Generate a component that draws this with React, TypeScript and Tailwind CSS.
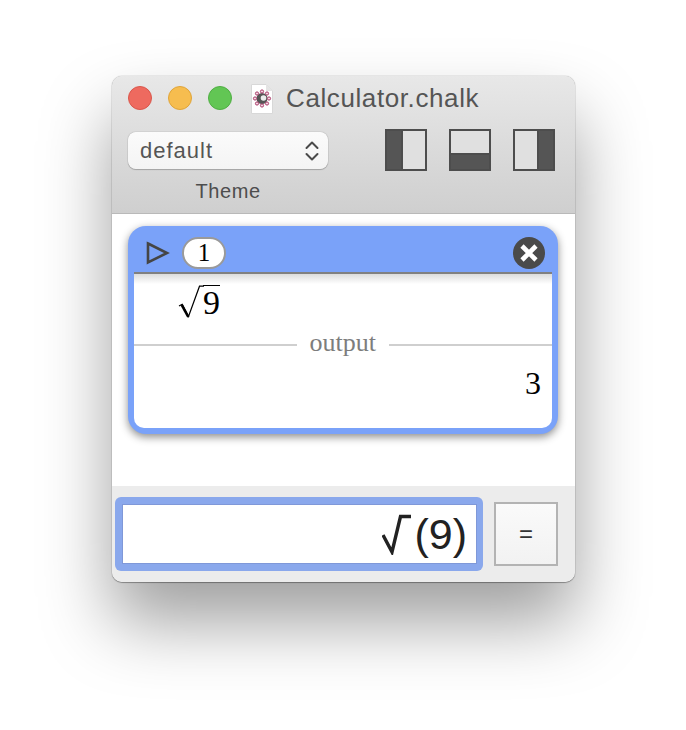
import React from 'react';

const sans = "font-['Liberation_Sans',Arial,sans-serif]";
const serif = "font-['Liberation_Serif','Times_New_Roman',serif]";

const DocIcon = () => (
  <svg width="24" height="32" viewBox="0 0 24 32">
    <path d="M1.5 1.5H16L22.5 8V30.5H1.5Z" fill="#fff" stroke="#d8d8d8" />
    <path d="M16 1.5V8H22.5Z" fill="#e4e4e4" />
    <circle cx="12" cy="15.5" r="5.5" fill="#555" />
    <circle cx="13.5" cy="15" r="2.8" fill="#ececec" />
    <circle cx="12" cy="8.5" r="1.6" fill="#f3d6e2" stroke="#a83a68" />
    <circle cx="12" cy="22.5" r="1.6" fill="#f3d6e2" stroke="#a83a68" />
    <circle cx="5" cy="15.5" r="1.6" fill="#f3d6e2" stroke="#a83a68" />
    <circle cx="19" cy="15.5" r="1.6" fill="#f3d6e2" stroke="#a83a68" />
    <circle cx="7" cy="10.5" r="1.6" fill="#f3d6e2" stroke="#a83a68" />
    <circle cx="17" cy="10.5" r="1.6" fill="#f3d6e2" stroke="#a83a68" />
    <circle cx="7" cy="20.5" r="1.6" fill="#f3d6e2" stroke="#a83a68" />
    <circle cx="17" cy="20.5" r="1.6" fill="#f3d6e2" stroke="#a83a68" />
  </svg>
);

const Chevrons = () => (
  <svg width="14" height="24" viewBox="0 0 14 24" fill="none" stroke="#4a4a4a" strokeWidth="2" strokeLinecap="round" strokeLinejoin="round">
    <path d="M1.5 9L7 3.5L12.5 9" />
    <path d="M1.5 15L7 20.5L12.5 15" />
  </svg>
);

const Radical = () => (
  <svg width="26" height="34" viewBox="0 0 26 34" fill="none" className="shrink-0">
    <path d="M1 21L4.2 19.3L10.5 31.5L21.5 1.2H26" stroke="#000" strokeWidth="1.2" />
    <path d="M3.7 19.8L10.3 32" stroke="#000" strokeWidth="2.6" />
  </svg>
);

const InputRadical = () => (
  <svg width="29" height="42" viewBox="0 0 29 42" fill="none" className="shrink-0">
    <path d="M1 22L10 39L18.5 3.5H29" stroke="#222" strokeWidth="3.4" />
  </svg>
);

const CloseIcon = () => (
  <svg width="32" height="32" viewBox="0 0 32 32">
    <circle cx="16" cy="16" r="16" fill="#4a4a4a" />
    <path d="M9 9L23 23M23 9L9 23" stroke="#fff" strokeWidth="4.6" />
  </svg>
);

export default function App() {
  return (
    <div className={`w-[686px] h-[730px] bg-white pt-[76px] pl-[112px] overflow-hidden ${sans}`}>
      <div className="w-[463px] h-[506px] rounded-[10px] overflow-hidden flex flex-col shadow-[0_40px_70px_rgba(0,0,0,0.38),0_0_1px_rgba(0,0,0,0.6),0_1px_1px_rgba(0,0,0,0.3)]">
        {/* toolbar */}
        <div className="h-[138px] shrink-0 bg-gradient-to-b from-[#e8e8e8] to-[#cfcfcf] border-b border-[#b9b9b9] pl-4 pr-5 flex flex-col">
          <div className="h-[44px] flex items-center shrink-0">
            <div className="w-6 h-6 rounded-full bg-[#ee6a5f] border border-[#d9574c]" />
            <div className="w-6 h-6 rounded-full bg-[#f6bd4f] border border-[#dfa43a] ml-4" />
            <div className="w-6 h-6 rounded-full bg-[#62c654] border border-[#50ae44] ml-4" />
            <div className="ml-[18px] mt-[2px]"><DocIcon /></div>
            <div className="ml-[12px] text-[26px] leading-none tracking-[0.6px] text-[#555]">Calculator.chalk</div>
          </div>
          <div className="flex justify-between mt-[9px]">
            <div className="mt-[3px] w-[200px] flex flex-col items-center">
              <div className="w-full h-[37px] rounded-lg bg-gradient-to-b from-[#fbfbfb] to-[#f4f4f4] shadow-[0_0_1px_rgba(0,0,0,0.5),0_1px_1px_rgba(0,0,0,0.2)] flex items-center justify-between pl-[12px] pr-[9px]">
                <span className="text-[22px] tracking-[1px] text-[#555]">default</span>
                <Chevrons />
              </div>
              <div className="mt-[11px] text-[20px] leading-[23px] tracking-[0.6px] text-[#4d4d4d]">Theme</div>
            </div>
            <div className="flex gap-[22px]">
              <div className="w-[42px] h-[42px] border-2 border-[#4d4d4d] bg-[#e0e0e0] flex">
                <div className="w-[16px] bg-[#555] border-r-2 border-[#4d4d4d]" />
              </div>
              <div className="w-[42px] h-[42px] border-2 border-[#4d4d4d] bg-[#e0e0e0] flex flex-col justify-end">
                <div className="h-[16px] bg-[#555] border-t-2 border-[#4d4d4d]" />
              </div>
              <div className="w-[42px] h-[42px] border-2 border-[#4d4d4d] bg-[#e0e0e0] flex justify-end">
                <div className="w-[16px] bg-[#555] border-l-2 border-[#4d4d4d]" />
              </div>
            </div>
          </div>
        </div>

        {/* result list */}
        <div className="h-[272px] shrink-0 bg-white pl-4 pt-[12px]">
          <div className="w-[430px] h-[208px] rounded-[18px] bg-[#7aa2f9] p-[6px] pt-0 shadow-[0_3px_8px_rgba(0,0,0,0.45)] flex flex-col">
            <div className="h-[46px] shrink-0 flex items-center pt-[7px]">
              <svg width="24" height="24" viewBox="0 0 24 24" fill="none" className="ml-[12px]">
                <path d="M2 2.5L21 12L2 21.5Z" stroke="#454545" strokeWidth="2.6" />
              </svg>
              <div className={`ml-[12px] w-[44px] h-[32px] rounded-[16px] bg-white border-2 border-[#9a9a9a] flex items-center justify-center text-[25px] text-black ${serif}`}>1</div>
              <div className="ml-auto mr-[7px]"><CloseIcon /></div>
            </div>
            <div className={`flex-1 bg-white rounded-b-[10px] border-t-2 border-[#808080] relative ${serif}`}>
              <div className="h-[10px] bg-gradient-to-b from-[#dcdcdc] to-white absolute top-0 left-0 right-0" />
              <div className="h-[46px] pl-[44px] pt-[11px] flex items-start relative">
                <Radical />
                <span className="text-[34px] leading-[32px] border-t-[1.5px] border-black -ml-[1px] pt-[1px] text-black">9</span>
              </div>
              <div className="flex items-center h-[46px] mt-[2px] text-[26px] text-[#7d7d7d]">
                <div className="flex-1 h-[2px] bg-[#cfcfcf]" />
                <span className="px-[13px] -mt-[6px]">output</span>
                <div className="w-[163px] h-[2px] bg-[#cfcfcf]" />
              </div>
              <div className="text-right pr-[11px] text-[32px] leading-[36px] -mt-[3px] text-black">3</div>
            </div>
          </div>
        </div>

        {/* input row */}
        <div className="flex-1 bg-[#ececec] pl-[3px] pr-[17px] pt-[11px] flex justify-between items-start">
          <div className="w-[368px] h-[74px] rounded-[6px] bg-[#8aa8ec] p-[7px] pr-[6px]">
            <div className="w-full h-[60px] bg-white border border-[#7f98d8] flex items-center justify-end pr-[9px] text-[43px] text-[#222]">
              <InputRadical />
              <span className="ml-[3px]">(9)</span>
            </div>
          </div>
          <div className="w-[64px] h-[64px] mt-[5px] bg-gradient-to-b from-[#fafafa] to-[#f2f2f2] border-2 border-[#b3b3b3] flex items-center justify-center text-[24px] text-[#333]">
            =
          </div>
        </div>
      </div>
    </div>
  );
}
